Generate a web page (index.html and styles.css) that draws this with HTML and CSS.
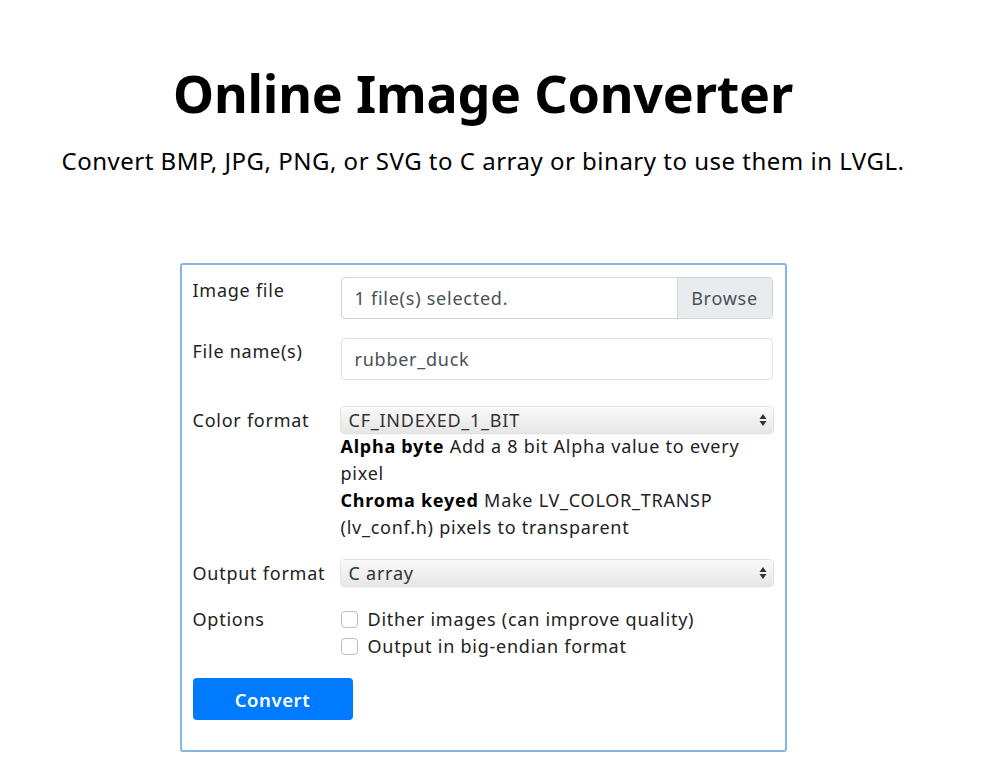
FILE: index.html
```html
<!DOCTYPE html>
<html lang="en">
<head>
<meta charset="utf-8">
<title>Online Image Converter</title>
<link rel="stylesheet" href="styles.css">
</head>
<body>
<div class="page">
  <header class="intro">
    <h1 class="title">Online Image Converter</h1>
    <p class="lead">Convert BMP, JPG, PNG, or SVG to C array or binary to use them in LVGL.</p>
  </header>

  <form class="card">
    <div class="row">
      <div class="label">Image file</div>
      <div class="field">
        <div class="file-input">
          <span class="file-text">1 file(s) selected.</span>
          <span class="browse">Browse</span>
        </div>
      </div>
    </div>

    <div class="row">
      <div class="label">File name(s)</div>
      <div class="field">
        <div class="text-input">rubber_duck</div>
      </div>
    </div>

    <div class="row row-spaced">
      <div class="label">Color format</div>
      <div class="field">
        <div class="select">
          <span>CF_INDEXED_1_BIT</span>
          <svg class="arrows" width="8" height="14" viewBox="0 0 8 14"><path d="M4 1 L7.5 6 H0.5 Z M4 13 L7.5 8 H0.5 Z" fill="#333"/></svg>
        </div>
        <div class="help">
          <p><b>Alpha byte</b> Add a 8 bit Alpha value to every pixel</p>
          <p><b>Chroma keyed</b> Make LV_COLOR_TRANSP (lv_conf.h) pixels to transparent</p>
        </div>
      </div>
    </div>

    <div class="row">
      <div class="label">Output format</div>
      <div class="field">
        <div class="select">
          <span>C array</span>
          <svg class="arrows" width="8" height="14" viewBox="0 0 8 14"><path d="M4 1 L7.5 6 H0.5 Z M4 13 L7.5 8 H0.5 Z" fill="#333"/></svg>
        </div>
      </div>
    </div>

    <div class="row">
      <div class="label">Options</div>
      <div class="field">
        <label class="check"><span class="box"></span>Dither images (can improve quality)</label>
        <label class="check"><span class="box"></span>Output in big-endian format</label>
      </div>
    </div>

    <div class="actions">
      <button type="button" class="btn">Convert</button>
    </div>
  </form>
</div>
</body>
</html>
```

FILE: styles.css
```css
html, body {
  margin: 0;
  padding: 0;
  background: #fff;
}

body {
  font-family: "Noto Sans", "Open Sans", sans-serif;
  color: #111;
  font-size: 18px;
  line-height: 27px;
  letter-spacing: 0.75px;
}

.page {
  width: 966px;
  display: flex;
  flex-direction: column;
  align-items: center;
}

.intro {
  text-align: center;
  padding-top: 56px;
}

.title {
  margin: 0;
  font-size: 52px;
  font-weight: 700;
  line-height: 74px;
  color: #000;
  letter-spacing: -0.2px;
}

.lead {
  margin: 14px 0 0;
  font-size: 24px;
  line-height: 34px;
  color: #000;
  letter-spacing: 0.5px;
}

.card {
  margin-top: 85px;
  width: 607px;
  box-sizing: border-box;
  border: 2px solid #8ab4e3;
  border-radius: 3px;
  padding: 12px 12px 30px 11px;
  display: flex;
  flex-direction: column;
  gap: 19px;
}

.row {
  display: flex;
  align-items: flex-start;
}

.row-spaced {
  margin-top: 8px;
}

.label {
  width: 148px;
  flex: none;
  color: #222;
}

.field {
  flex: 1;
  min-width: 0;
}

.file-input {
  display: flex;
  height: 42px;
  box-sizing: border-box;
  border: 1px solid #ced4da;
  border-radius: 4px;
  overflow: hidden;
}

.file-text {
  flex: 1;
  padding: 0 13px;
  line-height: 40px;
  color: #495057;
}

.browse {
  width: 95px;
  flex: none;
  box-sizing: border-box;
  border-left: 1px solid #ced4da;
  background: #e9ecef;
  color: #495057;
  text-align: center;
  line-height: 40px;
}

.text-input {
  height: 42px;
  box-sizing: border-box;
  border: 1px solid #dfe3e7;
  border-radius: 4px;
  padding: 0 13px;
  line-height: 40px;
  color: #495057;
}

.select {
  height: 26px;
  display: flex;
  align-items: center;
  justify-content: space-between;
  padding: 0 6px 0 8px;
  border-radius: 4px;
  background: linear-gradient(#fafafa, #e6e6e6);
  box-shadow: 0 0 0 1px #e2e2e2, 0 1px 2px rgba(0,0,0,0.12);
  color: #333;
}

.arrows {
  flex: none;
}

.help p {
  margin: 0;
  color: #222;
}

.help b {
  color: #000;
}

.check {
  display: flex;
  align-items: center;
  gap: 10px;
  color: #222;
}

.box {
  width: 17px;
  height: 17px;
  box-sizing: border-box;
  border: 1px solid #b8bec6;
  border-radius: 4px;
  background: #fff;
  flex: none;
}

.actions {
  display: flex;
  margin-top: -1px;
}

.btn {
  width: 160px;
  height: 42px;
  border: none;
  border-radius: 4px;
  background: #007bff;
  color: #fff;
  font: 600 18.5px "Noto Sans", sans-serif;
  letter-spacing: 0.6px;
}
```
